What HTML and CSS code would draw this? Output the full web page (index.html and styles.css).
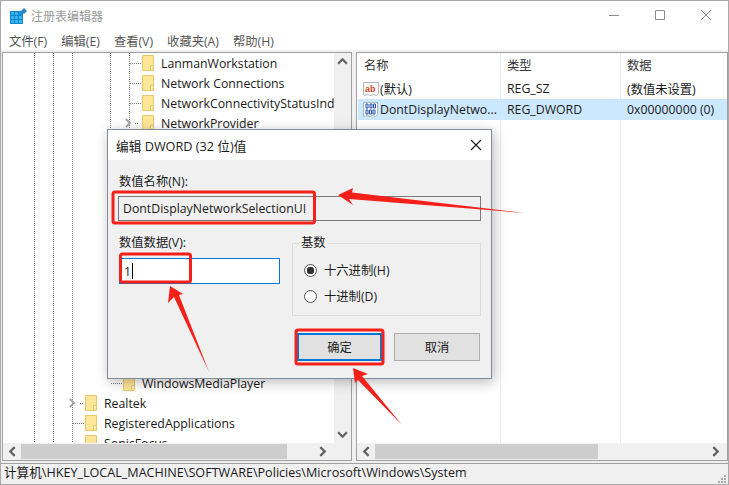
FILE: index.html
```html
<!DOCTYPE html>
<html lang="zh-CN">
<head>
<meta charset="utf-8">
<title>注册表编辑器</title>
<link rel="stylesheet" href="styles.css">
</head>
<body>
<svg width="0" height="0" class="defs">
  <symbol id="folder" viewBox="0 0 12 16">
    <path d="M.5.5h11v15H.5z" fill="#ffe699" stroke="#e8c766"/>
    <path d="M8.500 15.500v-5h3" fill="#fff3c8" stroke="#e8c766"/>
  </symbol>
  <symbol id="chev-r" viewBox="0 0 10 10"><path d="M3 1l4 4-4 4" fill="none" stroke="currentColor" stroke-width="2"/></symbol>
  <symbol id="chev-l" viewBox="0 0 10 10"><path d="M7 1L3 5l4 4" fill="none" stroke="currentColor" stroke-width="2"/></symbol>
  <symbol id="chev-u" viewBox="0 0 10 10"><path d="M1 7l4-4 4 4" fill="none" stroke="currentColor" stroke-width="2"/></symbol>
  <symbol id="chev-d" viewBox="0 0 10 10"><path d="M1 3l4 4 4-4" fill="none" stroke="currentColor" stroke-width="2"/></symbol>
</svg>
<div class="window">
  <header class="titlebar">
    <svg class="appicon" width="18" height="16" viewBox="0 0 18 16">
      <path d="M0 3h13v13H0z" fill="#0f86c9"/>
      <path d="M1 4h3v3H1zM5 4h3v3H5zM1 8h3v3H1zM5 8h3v3H5zM9 8h3v3H9zM1 12h3v3H1zM5 12h3v3H5zM9 12h3v3H9z" fill="#35b4f0"/>
      <path d="M9 4h3v3H9z" fill="#1b9ad8"/>
      <path d="M14 0l3 3-3 3-3-3z" fill="#2b87c0"/>
    </svg>
    <span class="apptitle">注册表编辑器</span>
    <div class="winctl">
      <svg width="12" height="12" viewBox="0 0 12 12"><path d="M1 6.500h10" stroke="#8c8c8c"/></svg>
      <svg width="12" height="12" viewBox="0 0 12 12"><path d="M1.500 1.500h9v9h-9z" fill="none" stroke="#8c8c8c"/></svg>
      <svg width="12" height="12" viewBox="0 0 12 12"><path d="M1 1l10 10M11 1L1 11" stroke="#8c8c8c"/></svg>
    </div>
  </header>
  <nav class="menubar">
    <span>文件(F)</span><span>编辑(E)</span><span>查看(V)</span><span>收藏夹(A)</span><span>帮助(H)</span>
  </nav>
  <main class="panes">
    <section class="pane tree-pane">
      <div class="tree-top">
        <div class="tree">
          <div class="deep">
            <div class="row lv3 leaf"><i class="tick"></i><svg class="fld"><use href="#folder"/></svg><span>LanmanWorkstation</span></div>
            <div class="row lv3 leaf"><i class="tick"></i><svg class="fld"><use href="#folder"/></svg><span>Network Connections</span></div>
            <div class="row lv3 leaf"><i class="tick"></i><svg class="fld"><use href="#folder"/></svg><span>NetworkConnectivityStatusInd</span></div>
            <div class="row lv3"><svg class="exp"><use href="#chev-r"/></svg><i class="tick short"></i><svg class="fld"><use href="#folder"/></svg><span>NetworkProvider</span></div>
            <div class="gap"></div>
          </div>
          <div class="row lv2 leaf"><i class="tick"></i><svg class="fld"><use href="#folder"/></svg><span>WindowsMediaPlayer</span></div>
          <div class="row lv1"><svg class="exp"><use href="#chev-r"/></svg><i class="tick short"></i><svg class="fld"><use href="#folder"/></svg><span>Realtek</span></div>
          <div class="row lv1 leaf"><i class="tick"></i><svg class="fld"><use href="#folder"/></svg><span>RegisteredApplications</span></div>
          <div class="row lv1 leaf"><i class="tick"></i><svg class="fld"><use href="#folder"/></svg><span>SonicFocus</span></div>
        </div>
        <div class="vscroll">
          <svg class="sb"><use href="#chev-u"/></svg>
          <svg class="sb"><use href="#chev-d"/></svg>
        </div>
      </div>
      <div class="hscroll">
        <svg class="sb"><use href="#chev-l"/></svg>
        <div class="track"><div class="thumb left-thumb"></div></div>
        <svg class="sb"><use href="#chev-r"/></svg>
      </div>
    </section>
    <section class="pane list-pane">
      <div class="list">
        <div class="lrow head"><span class="c1 hc">名称</span><span class="c2">类型</span><span class="c3">数据</span></div>
        <div class="lrow">
          <span class="c1">
            <svg class="val" width="16" height="16" viewBox="0 0 16 16"><path d="M.5 1.500h15v11l-2 2-3-1-3 1-3-1-3 1-1-1z" fill="#fff" stroke="#b5b5b5"/><text x="2" y="10.500" class="abtxt">ab</text></svg>
            <span>(默认)</span></span>
          <span class="c2">REG_SZ</span><span class="c3">(数值未设置)</span>
        </div>
        <div class="lrow sel">
          <span class="c1">
            <svg class="val" width="16" height="16" viewBox="0 0 16 16"><path d="M.5 .5h14v12l-2 2-3-1-3 1-3-1-3 1z" fill="#fff" stroke="#a9b6c4"/><path d="M3 2h2v4H3zM7 2h2v4H7zM10.500 2h2v4h-2zM3 8h2v4H3zM6.500 8h2v4h-2zM10 8h2v4h-2z" fill="none" stroke="#1f4fa8"/></svg>
            <span>DontDisplayNetwo...</span></span>
          <span class="c2">REG_DWORD</span><span class="c3">0x00000000 (0)</span>
        </div>
      </div>
      <div class="hscroll">
        <svg class="sb"><use href="#chev-l"/></svg>
        <div class="track"><div class="thumb right-thumb"></div></div>
        <svg class="sb"><use href="#chev-r"/></svg>
      </div>
    </section>
  </main>
  <footer class="statusbar">
    <span class="status-text">计算机\HKEY_LOCAL_MACHINE\SOFTWARE\Policies\Microsoft\Windows\System</span>
    <svg class="grip" width="9" height="9" viewBox="0 0 9 9"><path d="M6 0h2v2H6zM3 3h2v2H3zM6 3h2v2H6zM0 6h2v2H0zM3 6h2v2H3zM6 6h2v2H6z" fill="#a8a8a8"/></svg>
  </footer>
</div>

<div class="dialog">
  <div class="dlg-title">
    <span>编辑 DWORD (32 位)值</span>
    <svg width="12" height="12" viewBox="0 0 12 12"><path d="M1 1l10 10M11 1L1 11" stroke="#1a1a1a" stroke-width="1.100"/></svg>
  </div>
  <div class="dlg-body">
    <label class="lbl">数值名称(N):</label>
    <div class="name-input">DontDisplayNetworkSelectionUI</div>
    <div class="dlg-mid">
      <div class="data-col">
        <label class="lbl">数值数据(V):</label>
        <div class="data-input"><span>1</span><i class="caret"></i></div>
      </div>
      <fieldset class="base">
        <legend>基数</legend>
        <div class="radio on"><i></i><span>十六进制(H)</span></div>
        <div class="radio"><i></i><span>十进制(D)</span></div>
      </fieldset>
    </div>
    <div class="dlg-btns">
      <div class="btn default">确定</div>
      <div class="btn">取消</div>
    </div>
  </div>
</div>

<svg class="annot" width="729" height="485" viewBox="0 0 729 485">
  <g fill="none" stroke="#f5201a" stroke-width="3">
    <rect x="113" y="192" width="201.500" height="31" rx="2"/>
    <rect x="120.500" y="254" width="70" height="28" rx="2"/>
    <rect x="296" y="330" width="87" height="34" rx="2"/>
  </g>
  <g fill="#f5201a">
    <path d="M338 195L353 188 352 192.500 525 213 349 199 353 205z"/>
    <path d="M170 286L183 294 179 295 209 372 174 297 168 303z"/>
    <path d="M353 368L368 374 362 376 402 425 358 380 355 383z"/>
  </g>
</svg>
</body>
</html>
```
FILE: styles.css
```css
* { box-sizing: border-box; }
html, body { margin: 0; padding: 0; }
body {
  width: 729px;
  height: 485px;
  overflow: hidden;
  position: relative;
  font-family: "Open Sans", "Noto Sans CJK SC", sans-serif;
  font-size: 12.3px;
  color: #1a1a1a;
  background: #fff;
}
.defs { position: absolute; }
.window {
  height: 485px;
  display: flex;
  flex-direction: column;
  border: 1px solid #a8a8a8;
  background: #fff;
}
.titlebar {
  height: 27px;
  flex: none;
  display: flex;
  align-items: center;
  padding-left: 9px;
}
.appicon { margin-top: 3px; }
.apptitle { margin-left: 3px; color: #999; margin-top: 3px; font-size: 12px; }
.winctl {
  margin-left: auto;
  display: flex;
  gap: 34px;
  padding-right: 16px;
}
.menubar {
  height: 22px;
  flex: none;
  display: flex;
  gap: 14px;
  align-items: center;
  padding-left: 8px;
  color: #555;
  padding-top: 3px;
}
.panes {
  flex: 1;
  min-height: 0;
  display: flex;
  gap: 4px;
  background: #f0f0f0;
  padding: 2px 0 2px 1px;
}
.pane {
  border: 1px solid #a0a0a0;
  background: #fff;
  display: flex;
  flex-direction: column;
  min-width: 0;
}
.tree-pane { width: 350px; flex: none; }
.list-pane { flex: 1; }
.tree-top { flex: 1; min-height: 0; display: flex; }
.tree {
  flex: 1;
  min-width: 0;
  overflow: hidden;
  background-image:
    linear-gradient(#777 50%, transparent 50%),
    linear-gradient(#777 50%, transparent 50%),
    linear-gradient(#777 50%, transparent 50%);
  background-size: 1px 2px;
  background-repeat: repeat-y;
  background-position: 31px 0, 50px 0, 69px 0;
}
.deep {
  background-image:
    linear-gradient(#777 50%, transparent 50%),
    linear-gradient(#777 50%, transparent 50%);
  background-size: 1px 2px;
  background-repeat: repeat-y;
  background-position: 107px 0, 126px 0;
}
.row {
  height: 20px;
  display: flex;
  align-items: center;
  white-space: nowrap;
  color: #1a1a1a;
}
.row span { margin-left: 7px; }
.lv3 { padding-left: 127px; }
.lv2 { padding-left: 108px; }
.lv1 { padding-left: 70px; }
.tick {
  width: 12px;
  height: 1px;
  flex: none;
  background: repeating-linear-gradient(90deg, #777 0 1px, transparent 1px 2px);
}
.tick.short { width: 4px; margin: 0 3px 0 2px; }
.exp { width: 10px; height: 10px; color: #a6a6a6; flex: none; margin-left: -7px; }
.lv1 .exp { margin-left: -6px; }
.lv1 .tick.short { width: 3px; margin: 0 2px 0 3px; }
.fld { width: 12px; height: 16px; flex: none; }
.gap { height: 240px; }
.vscroll {
  width: 17px;
  flex: none;
  background: #f0f0f0;
  display: flex;
  flex-direction: column;
  justify-content: space-between;
  align-items: center;
  padding: 3px 0;
}
.sb { width: 11px; height: 11px; flex: none; color: #606060; }
.hscroll {
  height: 17px;
  flex: none;
  background: #f0f0f0;
  display: flex;
  align-items: center;
  padding: 0 5px 0 3px;
}
.tree-pane .hscroll { padding-right: 22px; }
.hscroll .sb { margin: 0 1px; }
.track { flex: 1; height: 17px; min-width: 0; }
.thumb { height: 15px; margin: 1px 0 0 2px; background: #cdcdcd; }
.left-thumb { width: 266px; }
.right-thumb { width: 223px; }
.list {
  flex: 1;
  min-height: 0;
  background-image: linear-gradient(#e5eefa, #e5eefa), linear-gradient(#e5eefa, #e5eefa);
  background-size: 1px 100%;
  background-repeat: no-repeat;
  background-position: 143px 0, 263px 0;
}
.lrow { display: flex; height: 21px; align-items: center; white-space: nowrap; }
.lrow.head { height: 25px; color: #333; padding-bottom: 1px; }
.lrow.sel { background: #cce8ff; margin-left: 1px; }
.c1 { width: 144px; display: flex; align-items: center; padding-left: 6px; gap: 1px; flex: none; }
.sel .c1 { width: 143px; padding-left: 5px; }
.c1.hc { padding-left: 7px; }
.c2 { width: 120px; padding-left: 6px; flex: none; }
.c3 { padding-left: 6px; }
.abtxt { font: bold 9px "Liberation Sans", sans-serif; fill: #d9431e; }
.val { flex: none; }
.statusbar {
  height: 21px;
  flex: none;
  background: #f0f0f0;
  border-top: 1px solid #a0a0a0;
  display: flex;
  align-items: center;
  justify-content: space-between;
  padding: 0 1px 0 3px;
  white-space: nowrap;
  font-size: 12.6px;
}
.status-text { line-height: 16px; margin-bottom: 3px; }
.grip { align-self: flex-end; }

.dialog {
  position: absolute;
  left: 107px;
  top: 129px;
  width: 385px;
  height: 250px;
  border: 1px solid #7f8c99;
  background: #f0f0f0;
  box-shadow: 2px 3px 12px rgba(0, 0, 0, .28);
  display: flex;
  flex-direction: column;
}
.dlg-title {
  height: 30px;
  flex: none;
  background: #fff;
  display: flex;
  align-items: center;
  justify-content: space-between;
  padding: 0 9px 0 8px;
  font-size: 12.7px;
}
.dlg-body { padding: 15px 10px 0 10px; flex: 1; display: flex; flex-direction: column; }
.lbl { display: block; height: 21px; line-height: 14px; padding-left: 1px; }
.name-input {
  height: 25px;
  width: 363px;
  flex: none;
  border: 1px solid #7a7a7a;
  display: flex;
  align-items: center;
  padding-left: 4px;
}
.dlg-mid { display: flex; margin-top: 15px; gap: 12px; align-items: flex-start; }
.data-col { width: 162px; flex: none; padding-left: 1px; }
.data-col .lbl { padding-left: 0; height: 22px; }
.data-input {
  height: 26px;
  width: 161px;
  border: 1px solid #0078d7;
  background: #fff;
  display: flex;
  align-items: center;
  padding-left: 4px;
}
.caret { width: 1px; height: 16px; background: #000; margin-left: 1px; }
.base {
  margin: 0;
  padding: 7px 0 0 11px;
  width: 189px;
  height: 80px;
  border: 1px solid #dcdcdc;
  min-width: 0;
}
.base legend { padding: 0 2px; margin-left: -5px; line-height: 14px; }
.radio { display: flex; align-items: center; gap: 7px; height: 26px; }
.radio i {
  width: 13px;
  height: 13px;
  border: 1px solid #555;
  border-radius: 50%;
  background: #fff;
  display: block;
  flex: none;
}
.radio.on i { background: radial-gradient(circle, #333 3.500px, #fff 4px); }
.dlg-btns { display: flex; gap: 12px; margin-top: 17px; padding-left: 179px; }
.btn {
  width: 86px;
  height: 28px;
  background: #e1e1e1;
  border: 1px solid #adadad;
  display: flex;
  align-items: center;
  justify-content: center;
}
.btn.default { border: 2px solid #0078d7; width: 85px; }
.annot { position: absolute; left: 0; top: 0; pointer-events: none; }
```
